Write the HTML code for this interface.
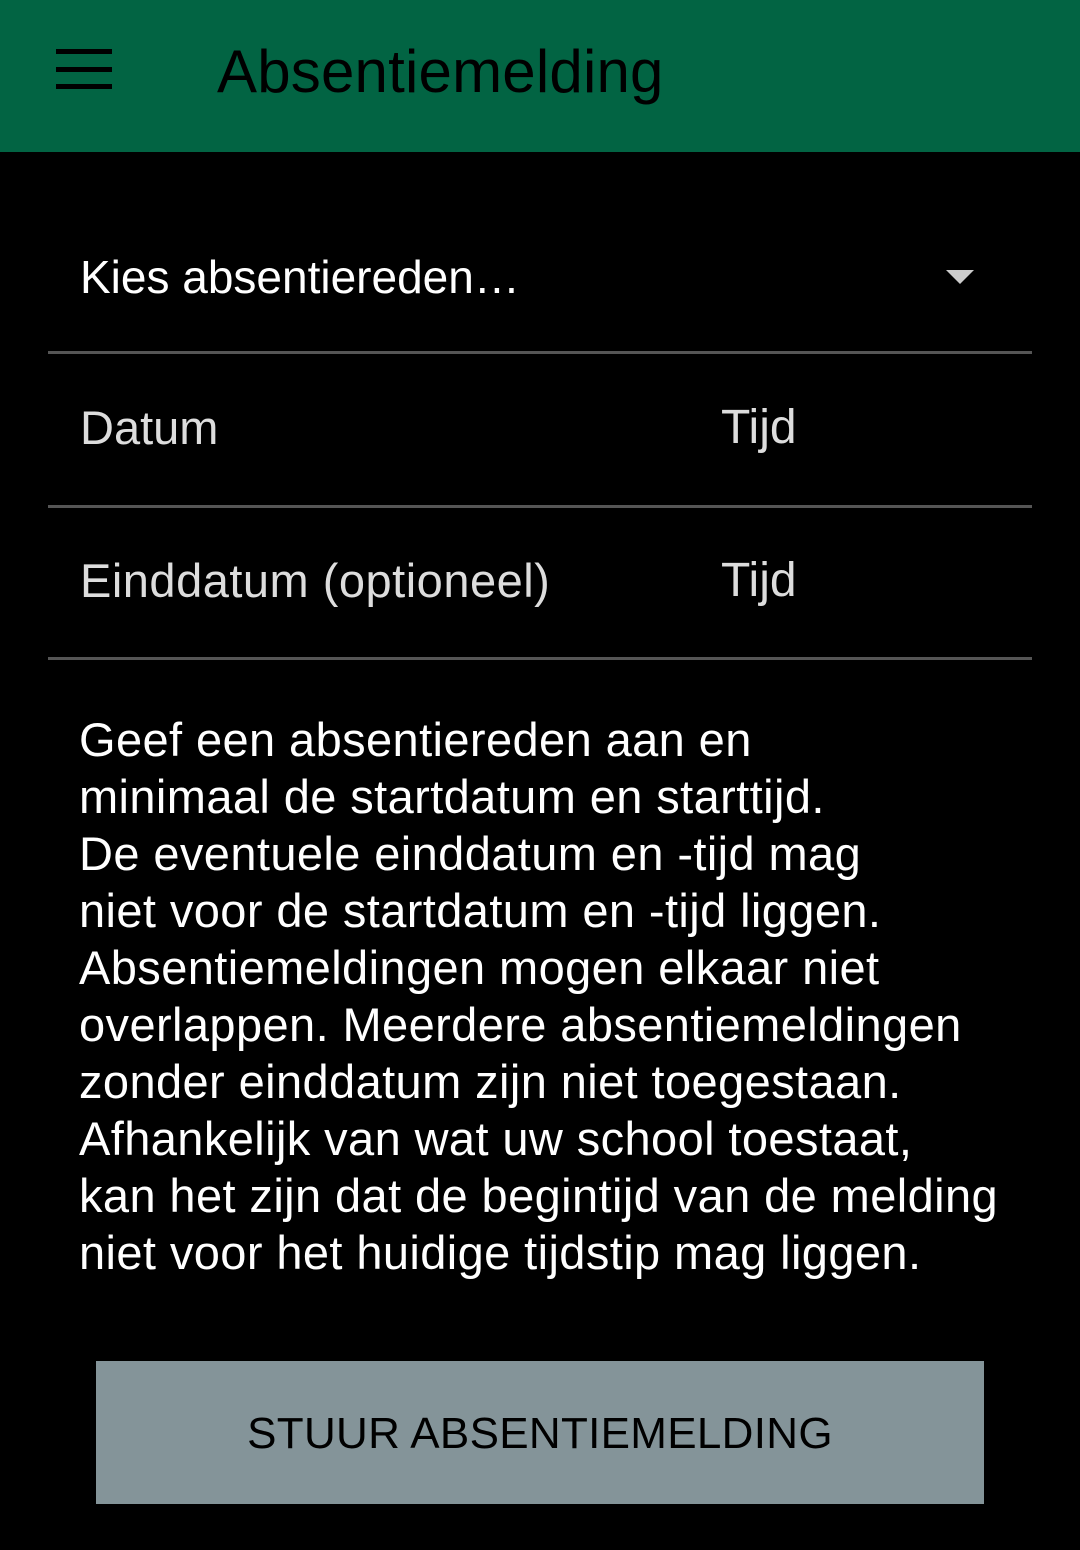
<!DOCTYPE html>
<html><head><meta charset="utf-8"><style>
body{margin:0;width:1080px;height:1550px;background:#000;font-family:"Liberation Sans",sans-serif;position:relative;overflow:hidden}
.hdr{position:absolute;left:0;top:0;width:1080px;height:152px;background:#026443}
.bar{position:absolute;left:56px;width:56px;height:5px;background:#000}
.t{position:absolute;white-space:nowrap;line-height:1}
.div{position:absolute;left:48px;width:984px;height:3px;background:#555}
</style></head><body>
<div class="hdr">
<div class="bar" style="top:49px"></div><div class="bar" style="top:67px"></div><div class="bar" style="top:84px"></div>
<div class="t" style="left:217px;top:42px;font-size:60px;color:#000;letter-spacing:0.2px">Absentiemelding</div>
</div>
<div class="t" style="left:80px;top:254px;font-size:46px;color:#fff">Kies absentiereden…</div>
<svg style="position:absolute;left:944px;top:268px" width="32" height="18"><polygon points="2,2 30,2 16,16" fill="#ccc"/></svg>
<div class="div" style="top:351px"></div>
<div class="t" style="left:80px;top:404px;font-size:47px;color:#ddd">Datum</div>
<div class="t" style="left:721px;top:404px;font-size:48px;color:#ddd">Tijd</div>
<div class="div" style="top:505px"></div>
<div class="t" style="left:80px;top:557px;font-size:47px;color:#ddd;letter-spacing:0.5px">Einddatum (optioneel)</div>
<div class="t" style="left:721px;top:557px;font-size:48px;color:#ddd">Tijd</div>
<div class="div" style="top:657px"></div>
<div class="t" style="left:79px;top:711px;font-size:47px;line-height:57px;color:#fff;letter-spacing:0.4px">Geef een absentiereden aan en<br>minimaal de startdatum en starttijd.<br>De eventuele einddatum en -tijd mag<br>niet voor de startdatum en -tijd liggen.<br>Absentiemeldingen mogen elkaar niet<br>overlappen. Meerdere absentiemeldingen<br>zonder einddatum zijn niet toegestaan.<br>Afhankelijk van wat uw school toestaat,<br>kan het zijn dat de begintijd van de melding<br>niet voor het huidige tijdstip mag liggen.</div>
<div style="position:absolute;left:96px;top:1361px;width:888px;height:143px;background:#849499"></div>
<div class="t" style="left:96px;width:888px;text-align:center;top:1412px;font-size:44px;color:#000;letter-spacing:0.3px">STUUR ABSENTIEMELDING</div>
</body></html>
